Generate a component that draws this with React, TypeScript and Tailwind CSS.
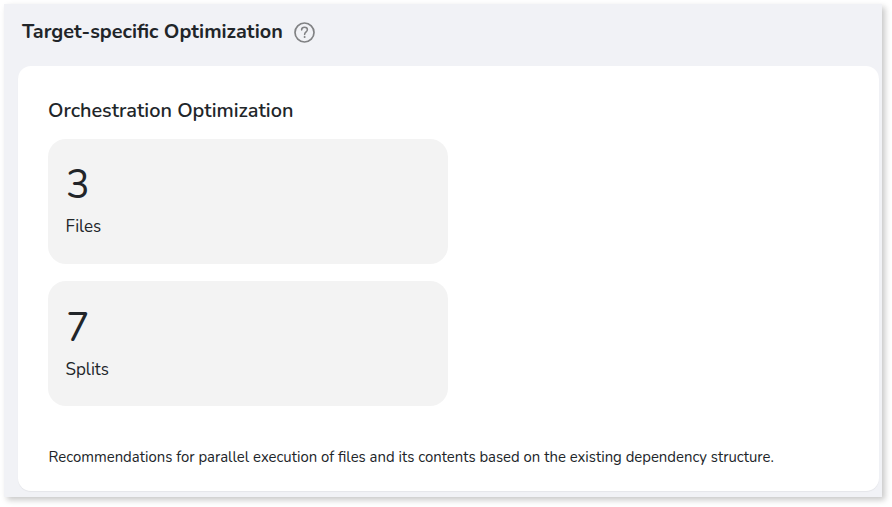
const stats = [
  { value: "3", label: "Files" },
  { value: "7", label: "Splits" },
];

export default function App() {
  return (
    <div className="h-[507px] w-[892px] overflow-hidden bg-white p-1 font-['Nunito','Noto_Sans',sans-serif] text-[#212529]">
      <section className="h-[493px] w-[878px] bg-[#f1f2f6] pr-[3px] pl-3.5 shadow-[3px_3px_6px_rgba(0,0,0,0.22)]">
        <header className="flex h-[62px] items-start gap-3 pt-3.5 pl-1">
          <h1 className="w-[260px] text-[19.85px] leading-[28px] font-bold whitespace-nowrap">
            Target-specific Optimization
          </h1>
          <HelpIcon />
        </header>
        <OptimizationCard />
      </section>
    </div>
  );
}

function OptimizationCard() {
  return (
    <div className="h-[425px] rounded-[13px] bg-white px-[30px] pt-[31px] shadow-[0_1px_1px_rgba(0,0,0,0.05)]">
      <h2 className="text-[19.9px] leading-[28px] font-semibold whitespace-nowrap">
        Orchestration Optimization
      </h2>
      <div className="mt-3.5 flex w-[400px] flex-col gap-[17.4px]">
        {stats.map((stat) => (
          <StatTile key={stat.label} value={stat.value} label={stat.label} />
        ))}
      </div>
      <p className="mt-[38.6px] pl-[0.5px] text-[14.9px] leading-6 whitespace-nowrap">
        Recommendations for parallel execution of files and its contents based
        on the existing dependency structure.
      </p>
    </div>
  );
}

function StatTile({ value, label }: { value: string; label: string }) {
  return (
    <div className="h-[125px] rounded-[18px] bg-[#f3f3f3] px-[17px] pt-[22.3px]">
      <div className="pl-px text-[39.5px] leading-[48px]">{value}</div>
      <div className="mt-[5px] pl-[0.5px] text-[17px] leading-[26px]">{label}</div>
    </div>
  );
}

function HelpIcon() {
  return (
    <svg
      className="mt-1 h-[21px] w-[21px] shrink-0 text-[#818284]"
      viewBox="0 0 21 21"
      fill="none"
      stroke="currentColor"
      aria-label="Help"
    >
      <circle cx="10.5" cy="10.5" r="9.5" strokeWidth="1.7" />
      <path
        d="M7.6 7.9C7.7 6.2 8.9 5.3 10.5 5.3c1.7 0 2.9.9 2.9 2.4 0 2.1-2.8 2.2-2.8 4.7"
        strokeWidth="1.5"
        strokeLinecap="round"
      />
      <circle cx="10.6" cy="15" r="1" fill="currentColor" stroke="none" />
    </svg>
  );
}
